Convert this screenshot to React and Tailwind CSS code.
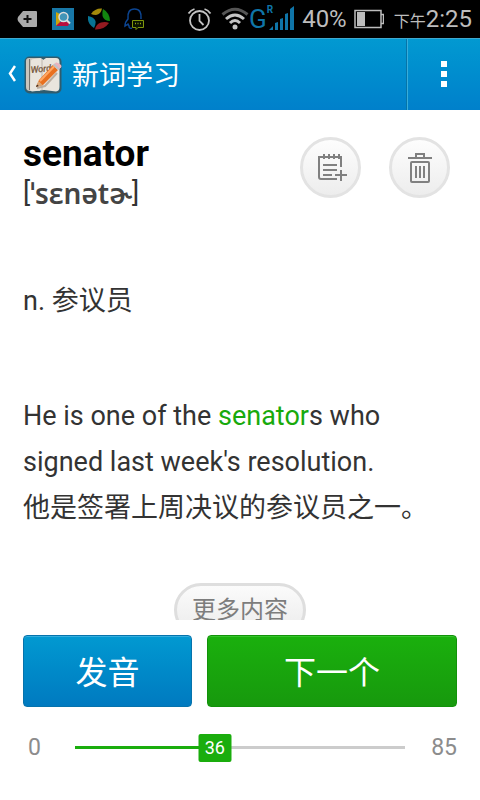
import { useState } from 'react';

const TOTAL = 85;

function StatusBar() {
  return (
    <div className="flex h-[38px] shrink-0 items-center bg-black text-[#bdbdbd]">
      <div className="flex flex-1 items-center gap-[14px] pl-[17px]">
        <svg width="21" height="22" viewBox="0 0 21 22" aria-hidden="true">
          <path d="M6 3H19Q20 3 20 4V18Q20 19 19 19H6L1 13Q0 11 1 9Z" fill="#aaa" />
          <path d="M10.500 7V15M6.500 11H14.500" stroke="#111" strokeWidth="2" />
        </svg>
        <svg width="22" height="22" viewBox="0 0 22 22" aria-hidden="true">
          <rect width="22" height="22" fill="#1878a8" />
          <path d="M4 4L8 6V15L4 18Z" fill="#c9a50c" />
          <path d="M8 14H18L16 18H4Z" fill="#b80f3f" />
          <circle cx="11.500" cy="9" r="4.500" fill="#4295b8" stroke="#ddd" strokeWidth="1.500" />
          <path d="M14.500 12L18 15.500" stroke="#ddd" strokeWidth="2" />
        </svg>
        <svg width="22" height="22" viewBox="0 0 22 22" aria-hidden="true">
          <path d="M3 6Q7 0 14 0.500Q13 6 8 7Q5 7 3 6Z" fill="#a38a0b" />
          <path d="M15 1Q22 5 22 13Q16 13 14.500 8Q14 4 15 1Z" fill="#12850f" />
          <path d="M21 15Q16 22 7 21.500Q8 16 13 14.500Q18 13.500 21 15Z" fill="#941b20" />
          <path d="M6 20Q-1 16 0 8Q6 9 7.500 13Q8 17 6 20Z" fill="#087494" />
        </svg>
        <svg width="22" height="22" viewBox="0 0 22 22" aria-hidden="true">
          <path d="M8 20Q5 21 5 18L4 16L1 18Q1 14 4 11Q3 1 10.500 1Q18 1 17 11" fill="none" stroke="#0c4592" strokeWidth="1.500" />
          <path d="M8.500 12.500H19.500V19.500H14L12 21.500V19.500H8.500Z" fill="#0a1200" stroke="#7f970c" />
          <path d="M11 15.500H12M13.500 15.500H14.500M16 15.500H17" stroke="#8fa912" strokeWidth="1.500" />
        </svg>
      </div>
      <svg className="mr-[9px]" width="25" height="25" viewBox="0 0 25 25" fill="none" stroke="#c4c4c4" strokeWidth="1.800" aria-hidden="true">
        <circle cx="12.500" cy="13.500" r="9.500" />
        <path d="M12.500 7V14L16.500 18M1.500 6.500Q4 3 7.500 2M23.500 6.500Q21 3 17.500 2" />
      </svg>
      <svg width="28" height="24" viewBox="0 0 28 24" fill="none" strokeWidth="3" aria-hidden="true">
        <path d="M1.500 7.500Q14 -3 26.500 7.500" stroke="#555" />
        <path d="M5 12Q14 4 23 12M9 16Q14 11 19 16" stroke="#c4c4c4" />
        <circle cx="14" cy="20" r="2.500" fill="#c4c4c4" />
      </svg>
      <div className="flex h-[28px] text-[#0f75a8]">
        <span className="text-[26px] leading-[28px]">G</span>
        <span className="text-[10px] font-bold leading-[10px]">R</span>
      </div>
      <svg className="-ml-[4px] mr-[7px]" width="26" height="26" viewBox="0 0 26 26" fill="#0f75a8" aria-hidden="true">
        <path d="M0 24L4 20V24ZM6 17L9 16V24H6ZM11 13L14 12V24H11ZM16 8L19 7V24H16ZM21 3L25 0V24H21Z" />
      </svg>
      <span className="text-[24px]">40%</span>
      <svg className="ml-[7px] mr-[10px]" width="30" height="20" viewBox="0 0 30 20" aria-hidden="true">
        <path d="M1 1.500H27V18.500H1ZM27 5.500H29.500V14.500H27" fill="none" stroke="#bdbdbd" strokeWidth="1.500" />
        <path d="M3 3H11V17H3Z" fill="#bdbdbd" />
      </svg>
      <span className="pr-2 text-[24px]">
        <span className="text-[16px]">下午</span>2:25
      </span>
    </div>
  );
}

function BookIcon() {
  return (
    <svg width="38" height="38" viewBox="0 0 38 38" aria-hidden="true">
      <rect x=".5" y=".5" width="37" height="37" rx="5" fill="#2f5c6e" />
      <path d="M2 5Q2 2 5 2H16V35H6Q2 35 2 31Z" fill="#c9c5bc" />
      <path d="M5 3H6V34H5Z" fill="#77736c" />
      <path d="M7 5Q7 3 10 3L17 2L19 4L22 2H32Q35.500 2 35.500 6V31Q35.500 35 32 35.500L20 34L8 35.500Q6 35 6 33Z" fill="#e9e5dd" />
      <path d="M18 3V34" stroke="#cbc6bc" strokeWidth="1.500" />
      <text x="7" y="17" fontSize="9" fontStyle="italic" fill="#75573c" stroke="#75573c" strokeWidth=".3" transform="rotate(-6 7 17)">Words</text>
      <path d="M13 32L21 30L33 17" fill="none" stroke="#b9ada0" strokeWidth="2" />
      <path d="M12 31L15 24L29 9L34 14L19 29Z" fill="#e8701f" />
      <path d="M16 25L30.500 10" stroke="#ffa763" strokeWidth="2" />
      <path d="M29 9L32 6.500Q34 6 37 9Q38 10 37 11.500L34 14Z" fill="#e9b3bd" />
      <path d="M29 9L30.500 7.500L35.500 12.500L34 14Z" fill="#bfc4c8" />
      <path d="M12 31L14.500 25L18.500 29Z" fill="#d9a878" />
      <path d="M12 31L13 28.500L14.800 30Z" fill="#3a2a20" />
    </svg>
  );
}

function Header() {
  return (
    <header className="flex h-[72px] shrink-0 border-t border-[#3fa9d0] bg-linear-to-b from-[#0299d1] to-[#0080cb] text-white">
      <button type="button" aria-label="返回" className="flex items-center gap-2 pl-2">
        <svg width="8" height="20" viewBox="0 0 8 20" fill="none" stroke="white" strokeWidth="2.500" aria-hidden="true">
          <path d="M7 1L2 8.500L7 16" />
        </svg>
        <BookIcon />
      </button>
      <h1 className="flex flex-1 items-center pl-[10px] pt-1 text-[27px]">新词学习</h1>
      <button type="button" aria-label="更多" className="flex w-[74px] flex-col items-center justify-center gap-1 border-l border-[#0674a8] pb-[2px] shadow-[inset_1px_0_0_#38aedb]">
        <span className="size-[6px] bg-white" />
        <span className="size-[6px] bg-white" />
        <span className="size-[6px] bg-white" />
      </button>
    </header>
  );
}

function RoundButton({ label, children }) {
  return (
    <button type="button" aria-label={label} className="flex size-[61px] items-center justify-center rounded-full border-[3px] border-[#e3e3e3] bg-linear-to-b from-[#fdfdfd] to-[#ededed]">
      {children}
    </button>
  );
}

export default function App() {
  const [position, setPosition] = useState(36);
  const percent = `${(position / TOTAL) * 100}%`;

  return (
    <div className="flex h-screen flex-col bg-white font-[Roboto,'Noto_Sans_CJK_SC',sans-serif] text-[#333]">
      <StatusBar />
      <Header />

      <main className="min-h-0 flex-1 overflow-hidden px-[23px]">
        <div className="flex justify-between pt-[27px]">
          <div>
            <h2 className="text-[37px] font-bold leading-[34px] text-black">senator</h2>
            <p className="flex items-center text-[27px] leading-[44px]">
              [<span className="font-['Noto_Sans',sans-serif] text-[28px] font-semibold text-[#444]">ˈsɛnətɚ</span>]
            </p>
          </div>
          <div className="flex gap-[28px] pr-[7px]">
            <RoundButton label="加入生词本">
              <svg width="32" height="30" viewBox="0 0 32 30" fill="none" stroke="#808080" strokeWidth="2" aria-hidden="true">
                <path d="M26 14V4H4V24Q4 26 6 26H22M9 1V6M14 1V6M19 1V6M24 1V6M8 12H22M8 17H22M8 22H17M26 17V28M20 22H32" />
              </svg>
            </RoundButton>
            <RoundButton label="删除">
              <svg width="24" height="30" viewBox="0 0 24 30" fill="none" stroke="#808080" strokeWidth="2" aria-hidden="true">
                <path d="M0 5H24M8 5V1H16V5M4 9H20Q21 9 21 10V28Q21 29 20 29H4Q3 29 3 28V10Q3 9 4 9M8 13V25M12 13V25M16 13V25" />
              </svg>
            </RoundButton>
          </div>
        </div>

        <p className="pt-[63px] text-[27px] leading-[46px]">n. 参议员</p>

        <div className="pt-[69px] text-[27px] leading-[46px]">
          <p>
            He is one of the <span className="text-[#18aa0c]">senator</span>s who signed last week's resolution.
          </p>
          <p>他是签署上周决议的参议员之一。</p>
        </div>

        <div className="flex justify-center pt-[52px]">
          <button type="button" className="h-[54px] rounded-full border-[3px] border-[#dedede] bg-linear-to-b from-[#fbfbfb] to-[#ebebeb] px-[15px] text-[24px] leading-[46px] text-[#7d7d7d]">
            更多内容
          </button>
        </div>
      </main>

      <footer className="shrink-0 px-[23px] pb-[38px] pt-[15px]">
        <div className="grid grid-cols-[169fr_250fr] gap-[15px] text-[32px] text-white">
          <button type="button" className="h-[72px] rounded-[4px] border border-[#0673ac] bg-linear-to-b from-[#0299d1] to-[#007ac0] pt-1 shadow-[inset_0_1px_0_#35aede]">
            发音
          </button>
          <button type="button" className="h-[72px] rounded-[4px] border border-[#12920a] bg-linear-to-b from-[#1ab00d] to-[#17990d] pt-1 shadow-[inset_0_1px_0_#35c42a]">
            下一个
          </button>
        </div>

        <div className="flex items-center pt-[26px] text-[23px] leading-[29px] text-[#8c8c8c]">
          <label htmlFor="progress" className="w-[52px] pl-[5px]">0</label>
          <div className="relative flex h-[29px] flex-1 items-center">
            <div className="h-[3px] w-full bg-[#ccc]">
              <div className="h-full bg-[#1aad0d]" style={{ width: percent }} />
            </div>
            <span
              className="absolute flex h-[28px] w-[33px] -translate-x-1/2 items-center justify-center rounded-[2px] bg-[#1aad0d] text-[18px] text-white"
              style={{ left: percent }}
            >
              {position}
            </span>
            <input
              id="progress"
              type="range"
              min="0"
              max={TOTAL}
              value={position}
              onChange={(event) => setPosition(Number(event.target.value))}
              className="absolute inset-0 m-0 w-full opacity-0"
            />
          </div>
          <span className="w-[52px] text-right">{TOTAL}</span>
        </div>
      </footer>
    </div>
  );
}
